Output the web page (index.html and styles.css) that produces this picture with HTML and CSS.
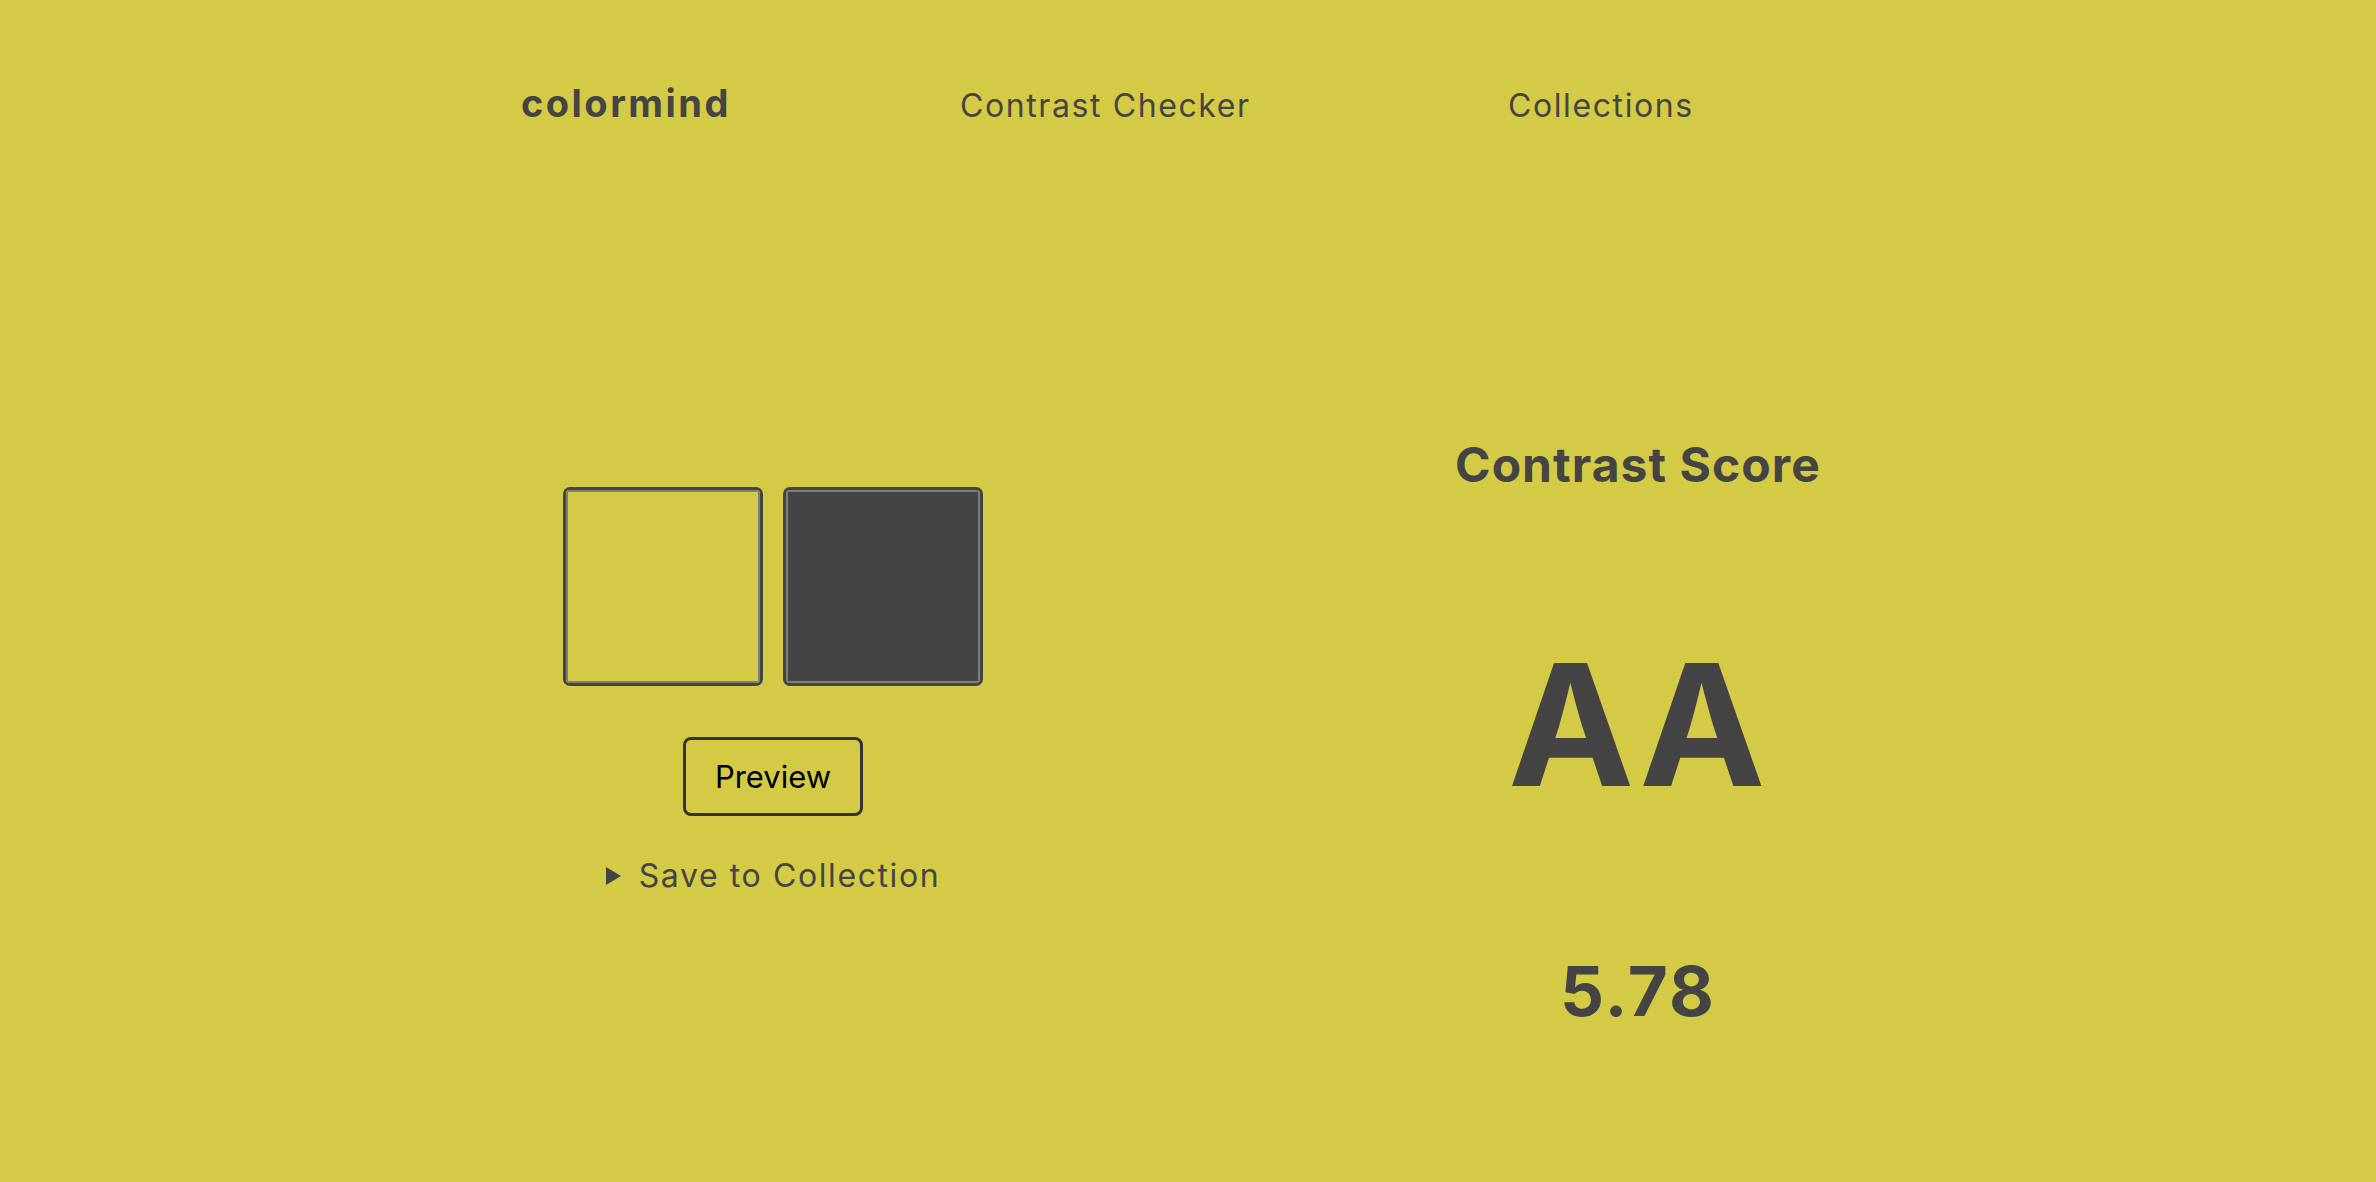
FILE: index.html
```html
<!DOCTYPE html>
<html lang="en">
<head>
<meta charset="utf-8">
<title>colormind — Contrast Checker</title>
<link rel="stylesheet" href="styles.css">
</head>
<body>
<header class="topbar">
  <a class="logo" href="#">colormind</a>
  <a class="nav-link" href="#">Contrast Checker</a>
  <a class="nav-link" href="#">Collections</a>
</header>
<main class="checker">
  <section class="picker">
    <div class="swatches">
      <div class="swatch"><div class="swatch-fill swatch-fill--bg"></div></div>
      <div class="swatch"><div class="swatch-fill swatch-fill--fg"></div></div>
    </div>
    <button class="preview-btn" type="button">Preview</button>
    <details class="save">
      <summary class="save-summary">Save to Collection</summary>
    </details>
  </section>
  <section class="score">
    <h2 class="score-title">Contrast Score</h2>
    <div class="score-grade">AA</div>
    <div class="score-ratio">5.78</div>
  </section>
</main>
</body>
</html>
```
FILE: styles.css
```css
html, body {
  margin: 0;
  padding: 0;
}
body {
  background: #d5ca45;
  color: #444444;
  font-family: Inter, "Noto Sans", sans-serif;
  min-height: 1182px;
}
a {
  color: inherit;
  text-decoration: none;
}

.topbar {
  display: grid;
  grid-template-columns: 439px 548px auto;
  align-items: baseline;
  padding: 81px 0 0 521px;
}
.logo {
  font-size: 38px;
  font-weight: 700;
  letter-spacing: 0.065em;
  line-height: 1.21;
}
.nav-link {
  font-size: 32px;
  font-weight: 400;
  letter-spacing: 0.05em;
  line-height: 1.21;
}

.checker {
  display: grid;
  grid-template-columns: 864px 866px;
  margin: 309px 0 0 341px;
  align-items: start;
}

.picker {
  display: flex;
  flex-direction: column;
  align-items: center;
  padding-top: 51px;
}
.swatches {
  display: flex;
  gap: 20px;
}
.swatch {
  width: 200px;
  height: 199px;
  box-sizing: border-box;
  border: 3px solid #444444;
  border-radius: 7px;
  overflow: hidden;
}
.swatch-fill {
  width: 100%;
  height: 100%;
  box-sizing: border-box;
  border: 2px solid #7e7e7e;
}
.swatch-fill--bg { background: #d5ca45; }
.swatch-fill--fg { background: #444444; }

.preview-btn {
  margin-top: 51px;
  width: 180px;
  height: 79px;
  box-sizing: border-box;
  border: 3px solid #333333;
  border-radius: 8px;
  background: transparent;
  color: #000000;
  font-family: Inter, "Noto Sans", sans-serif;
  font-size: 31px;
  padding: 0;
}

.save {
  margin-top: 41px;
}
.save-summary {
  list-style: none;
  display: flex;
  align-items: center;
  font-size: 32px;
  letter-spacing: 0.05em;
  line-height: 1.21;
  cursor: pointer;
}
.save-summary::-webkit-details-marker {
  display: none;
}
.save-summary::before {
  content: "";
  width: 0;
  height: 0;
  border-left: 15px solid #444444;
  border-top: 9.5px solid transparent;
  border-bottom: 9.5px solid transparent;
  margin-right: 18px;
}

.score {
  display: flex;
  flex-direction: column;
  align-items: center;
}
.score-title {
  margin: 0;
  font-size: 48px;
  font-weight: 700;
  letter-spacing: 0.022em;
  line-height: 1.21;
}
.score-grade {
  margin-top: 129px;
  font-size: 169px;
  font-weight: 700;
  letter-spacing: 0.015em;
  line-height: 1.21;
}
.score-ratio {
  margin-top: 122px;
  font-size: 69px;
  font-weight: 700;
  letter-spacing: 0.03em;
  line-height: 1.21;
}
```
